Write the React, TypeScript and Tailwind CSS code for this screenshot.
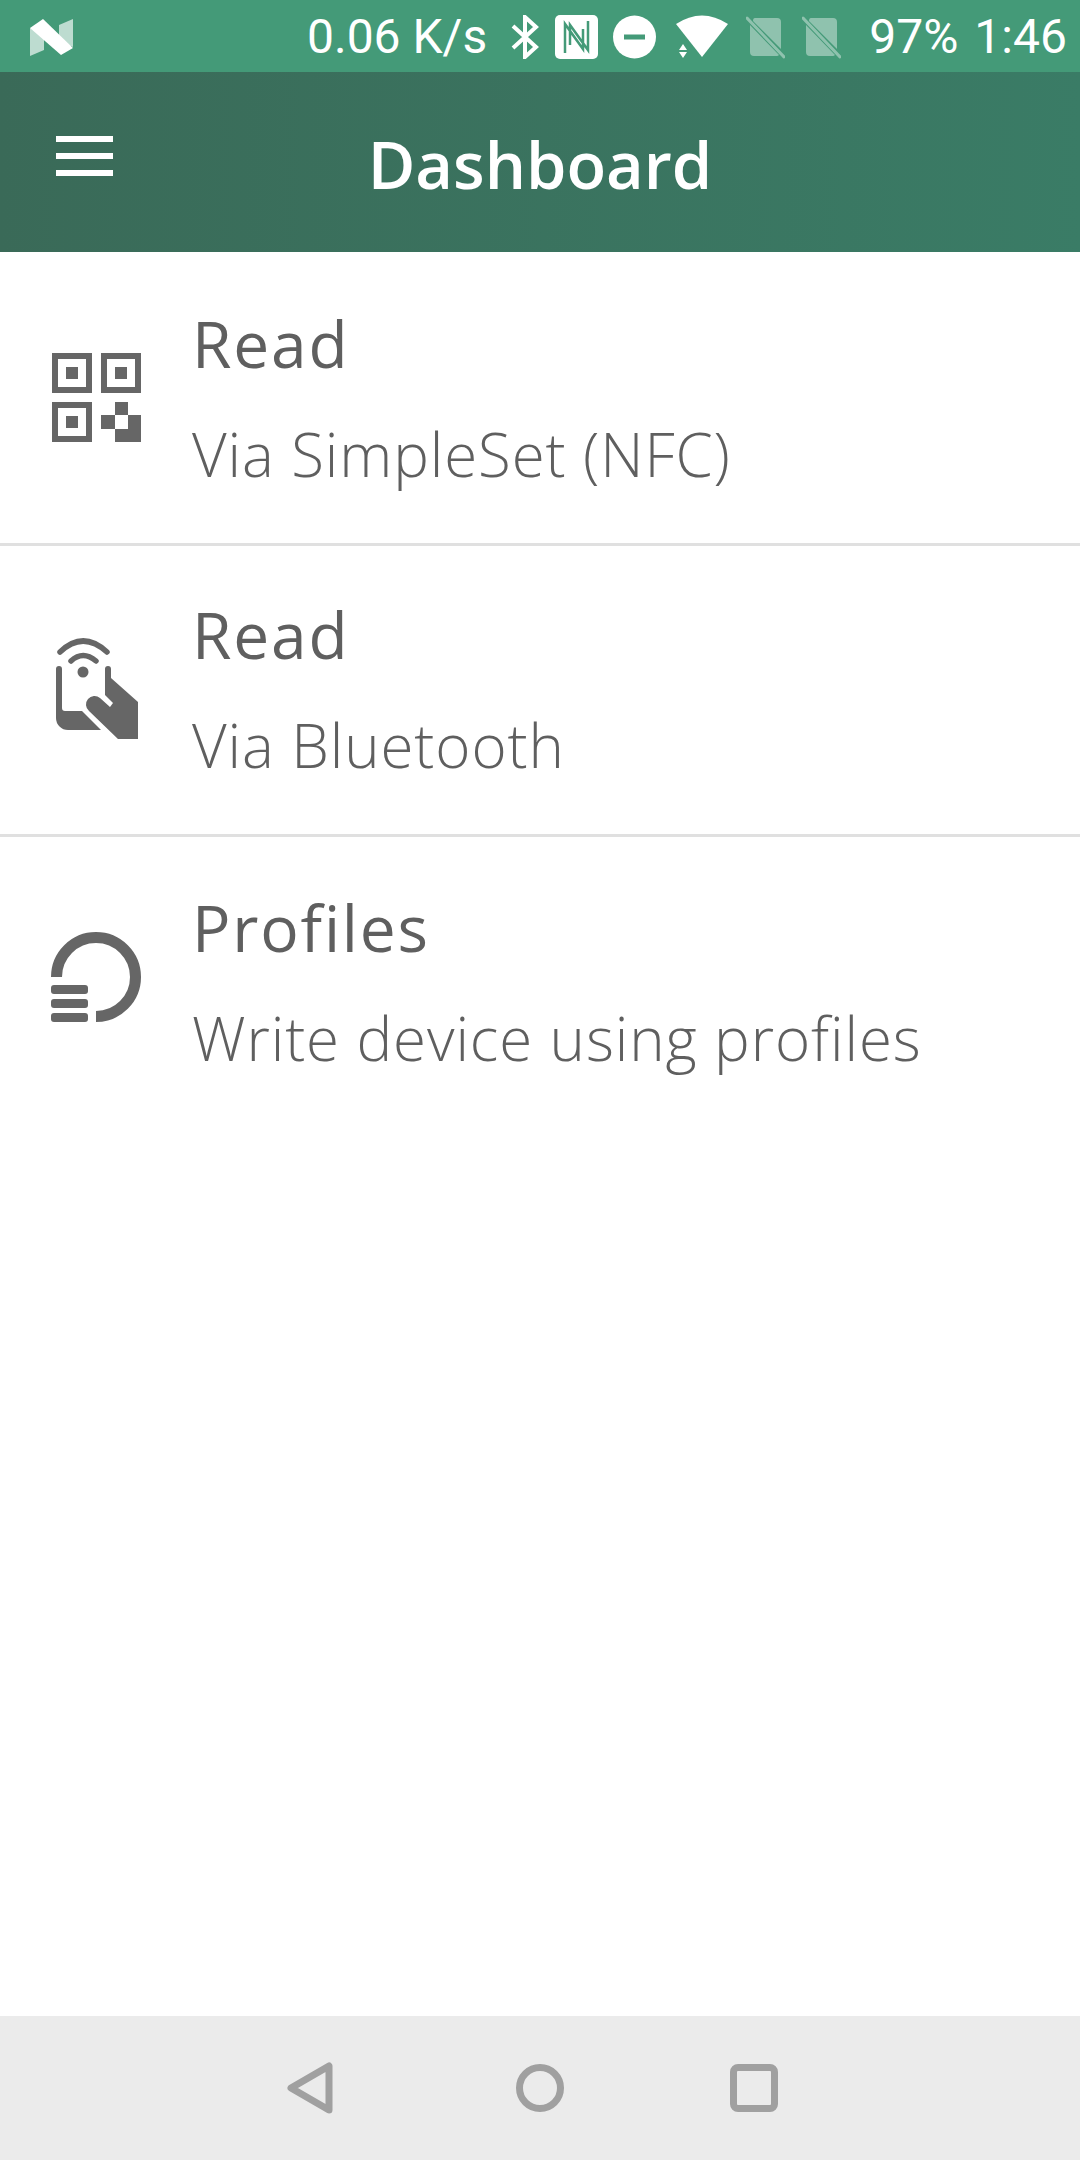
const font = { fontFamily: '"Open Sans", sans-serif' };

function SimOff() {
  return (
    <svg width="39" height="44" viewBox="0 0 39 44" className="opacity-40 ml-[17px]">
      <path d="M9 3H31a4 4 0 0 1 4 4V34L7 6Q7 3 9 3Z M4 10L33 40Q32 41 31 41H8a4 4 0 0 1-4-4Z" fill="#fff" />
      <path d="M1 3L38 42" stroke="#fff" strokeWidth="3" strokeLinecap="round" />
    </svg>
  );
}

function StatusBar() {
  return (
    <div className="h-[72px] bg-[#449a78] flex items-center text-white pl-[30px] pt-[2px] font-['Roboto'] text-[48px] leading-none">
      <svg width="44" height="37" viewBox="0 0 44 37" className="mr-[233px] shrink-0">
        <path d="M0 9L14 15V31L0 37Z" fill="#fff" opacity="0.65" />
        <path d="M43 0L29 6V22L43 28Z" fill="#fff" opacity="0.65" />
        <path d="M0 9L13 0L43 29L31 36Z" fill="#fff" />
      </svg>
      <span>0.06 K/s</span>
      <svg width="28" height="44" viewBox="0 0 28 44" className="ml-[24px]">
        <path d="M2 11L25 32L14 42V2L25 12L2 33" fill="none" stroke="#fff" strokeWidth="4" />
      </svg>
      <svg width="43" height="44" viewBox="0 0 43 44" className="ml-[16px]">
        <rect width="43" height="44" rx="5" fill="#fff" />
        <path d="M10 38V9L28 34V14M33 6V35L15 10V30" fill="none" stroke="#449a78" strokeWidth="2.5" />
      </svg>
      <svg width="43" height="44" viewBox="0 0 43 44" className="ml-[15px]">
        <circle cx="21.5" cy="22" r="21.5" fill="#fff" />
        <rect x="11" y="19.5" width="21" height="5" fill="#449a78" />
      </svg>
      <svg width="53" height="44" viewBox="0 0 53 44" className="ml-[20px]">
        <path d="M0 9Q26 -8 52 9L26 42Z" fill="#fff" />
        <path d="M7 29L11 35H3Z M3 37H11L7 43Z" fill="#fff" />
      </svg>
      <SimOff />
      <SimOff />
      <span className="ml-[28px]">97%</span>
      <span className="ml-[16px]">1:46</span>
    </div>
  );
}

function Toolbar() {
  return (
    <div className="h-[180px] bg-gradient-to-r from-[#3a6a58] to-[#3a7c66] grid grid-cols-[1fr_auto_1fr] items-center">
      <div className="pl-[56px] pb-[12px]">
        <div className="w-[57px] h-[40px] flex flex-col justify-between">
          <div className="h-[6px] bg-white" />
          <div className="h-[6px] bg-white" />
          <div className="h-[6px] bg-white" />
        </div>
      </div>
      <h1 className="text-[65px] font-semibold text-white leading-none pt-[4px]" style={font}>
        Dashboard
      </h1>
      <div />
    </div>
  );
}

function QrIcon() {
  return (
    <svg width="130" height="130" viewBox="0 0 130 130" fill="#666">
      <path fillRule="evenodd" d="M22 22H62V62H22Z M28 28V56H56V28Z" />
      <rect x="36" y="36" width="12" height="12" />
      <path fillRule="evenodd" d="M71 22H111V62H71Z M77 28V56H105V28Z" />
      <rect x="85" y="36" width="12" height="12" />
      <path fillRule="evenodd" d="M22 71H62V111H22Z M28 77V105H56V77Z" />
      <rect x="36" y="85" width="12" height="12" />
      <rect x="85" y="71" width="13" height="13" />
      <rect x="71" y="84" width="14" height="14" />
      <path d="M98 84H111V111H85V98H98Z" />
    </svg>
  );
}

function HandIcon() {
  return (
    <svg width="130" height="130" viewBox="0 0 130 130" fill="#666">
      <path d="M30 30Q53 8 77 30" fill="none" stroke="#666" strokeWidth="5.5" strokeLinecap="round" />
      <path d="M41 39Q53 28 66 39" fill="none" stroke="#666" strokeWidth="5.5" strokeLinecap="round" />
      <circle cx="53" cy="50" r="5.5" />
      <path d="M26 47a3 3 0 0 1 6 0V86a3 3 0 0 0 3 3H52L71 108H38a12 12 0 0 1-12-12Z" />
      <path d="M75 47a3 3 0 0 1 6 0V56L108 80V117H88L59 89a8 8 0 0 1 11-13L80 85L83 81L75 73Z" />
    </svg>
  );
}

function ProfileIcon() {
  return (
    <svg width="130" height="130" viewBox="0 0 130 130" fill="#666">
      <path d="M26.5 63A39.5 39.5 0 1 1 66 102.5" fill="none" stroke="#666" strokeWidth="11" />
      <rect x="21" y="71" width="37" height="9" rx="3" />
      <rect x="21" y="85" width="37" height="9" rx="3" />
      <rect x="21" y="99" width="37" height="9" rx="3" />
    </svg>
  );
}

const rows = [
  { title: 'Read', sub: 'Via SimpleSet (NFC)', icon: <QrIcon /> },
  { title: 'Read', sub: 'Via Bluetooth', icon: <HandIcon /> },
  { title: 'Profiles', sub: 'Write device using profiles', icon: <ProfileIcon /> },
];

function Row({ title, sub, icon, last }: { title: string; sub: string; icon: React.ReactNode; last: boolean }) {
  return (
    <div className={`h-[291px] flex items-center ${last ? '' : 'border-b-[3px] border-[#e0e0e0]'}`}>
      <div className="w-[192px] pl-[30px] mb-[7px] shrink-0">{icon}</div>
      <div className="text-[#5f5f5f]" style={font}>
        <div className="text-[64px] leading-[80px] font-medium tracking-[1.8px]">{title}</div>
        <div className="text-[60px] leading-[80px] font-light tracking-[0.9px] mt-[30px]">{sub}</div>
      </div>
    </div>
  );
}

export default function App() {
  return (
    <div className="w-[1080px] h-[2160px] flex flex-col bg-white overflow-hidden">
      <StatusBar />
      <Toolbar />
      <div className="flex-1 pt-[3px]">
        {rows.map((r, i) => (
          <Row key={i} {...r} last={i === rows.length - 1} />
        ))}
      </div>
      <div className="h-[144px] bg-[#ebebeb] flex items-center pl-[287px]">
        <svg width="48" height="52" viewBox="0 0 48 52" fill="none" stroke="#a0a0a0" strokeWidth="7" strokeLinejoin="round">
          <path d="M4 26L42 4V48Z" />
        </svg>
        <div className="ml-[181px] w-[48px] h-[48px] rounded-full border-[7px] border-[#a0a0a0]" />
        <div className="ml-[166px] w-[48px] h-[48px] rounded-[8px] border-[7px] border-[#a0a0a0]" />
      </div>
    </div>
  );
}
